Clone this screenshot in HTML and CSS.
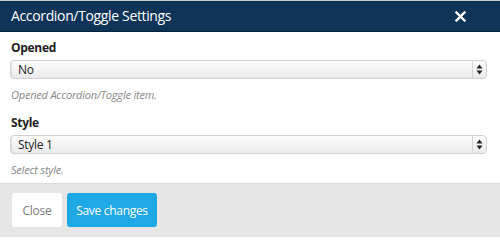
FILE: index.html
```html
<!DOCTYPE html>
<html>
<head>
<meta charset="utf-8">
<link rel="stylesheet" href="styles.css">
</head>
<body>
<div class="modal">
  <div class="modal-header">
    <span class="modal-title">Accordion/Toggle Settings</span>
    <span class="close-x"><svg width="11" height="11" viewBox="0 0 11 11"><path d="M1.5 1.5 L9.5 9.5 M9.5 1.5 L1.5 9.5" stroke="#fff" stroke-width="2.4" stroke-linecap="square"/></svg></span>
  </div>
  <div class="modal-body">
    <div class="field">
      <div class="label">Opened</div>
      <div class="select"><span class="select-value">No</span><span class="select-arrows"><svg width="7" height="11" viewBox="0 0 7 11"><path d="M3.5 0.5 L6.5 4.5 L0.5 4.5 Z M3.5 10.5 L6.5 6.5 L0.5 6.5 Z" fill="#222"/></svg></span></div>
      <div class="help">Opened Accordion/Toggle item.</div>
    </div>
    <div class="field">
      <div class="label">Style</div>
      <div class="select"><span class="select-value">Style 1</span><span class="select-arrows"><svg width="7" height="11" viewBox="0 0 7 11"><path d="M3.5 0.5 L6.5 4.5 L0.5 4.5 Z M3.5 10.5 L6.5 6.5 L0.5 6.5 Z" fill="#222"/></svg></span></div>
      <div class="help">Select style.</div>
    </div>
  </div>
  <div class="modal-footer">
    <button class="btn btn-default">Close</button>
    <button class="btn btn-primary">Save changes</button>
  </div>
</div>
</body>
</html>
```

FILE: styles.css
```css
html, body {
  margin: 0;
  padding: 0;
  background: #fff;
}
body {
  font-family: "Open Sans", "DejaVu Sans", sans-serif;
  color: #333;
}
.modal {
  width: 500px;
  height: 237px;
  display: flex;
  flex-direction: column;
  overflow: hidden;
}
.modal-header {
  height: 30px;
  border-top: 1px solid #c9ced4;
  border-bottom: 1px solid #05203a;
  background: #0f3457;
  display: flex;
  align-items: center;
  justify-content: space-between;
  padding: 0 34px 0 11px;
}
.modal-title {
  color: #fff;
  font-size: 14px;
  line-height: 20px;
  letter-spacing: -0.35px;
}
.close-x {
  display: flex;
  align-items: center;
  padding-top: 1px;
}
.modal-body {
  padding: 8px 13px 5px 10px;
  display: flex;
  flex-direction: column;
  gap: 12px;
}
.field {
  display: flex;
  flex-direction: column;
}
.label {
  font-weight: bold;
  font-size: 12px;
  line-height: 16px;
  padding-left: 1px;
  color: #222;
  letter-spacing: -0.3px;
}
.select {
  margin-top: 4px;
  height: 17px;
  border: 1px solid #d2d2d2;
  border-radius: 4px;
  background: linear-gradient(#fdfdfd, #ebebeb);
  box-shadow: inset 1px 0 1px rgba(0,0,0,0.08);
  display: flex;
  align-items: center;
  justify-content: space-between;
}
.select-value {
  font-size: 12px;
  line-height: 17px;
  padding-left: 7px;
  color: #222;
  letter-spacing: -0.3px;
}
.select-arrows {
  width: 13px;
  height: 17px;
  border-left: 1px solid #d4d4d4;
  display: flex;
  align-items: center;
  justify-content: center;
}
.help {
  margin-top: 8px;
  font-size: 11px;
  line-height: 16px;
  font-style: italic;
  color: #888;
  padding-left: 1px;
  letter-spacing: -0.2px;
}
.modal-footer {
  flex: 1;
  background: #e6e6e6;
  border-top: 1px solid #dcdcdc;
  padding: 9px 12px 0 12px;
  display: flex;
  align-items: flex-start;
  gap: 5px;
}
.btn {
  height: 34px;
  border: none;
  border-radius: 3px;
  font-family: "Open Sans", "DejaVu Sans", sans-serif;
  font-size: 12px;
  letter-spacing: -0.3px;
  padding: 0;
  cursor: pointer;
}
.btn-default {
  width: 50px;
  background: #fff;
  color: #7a7a7a;
}
.btn-primary {
  width: 90px;
  background: #1ea8e5;
  color: #fff;
}
```
